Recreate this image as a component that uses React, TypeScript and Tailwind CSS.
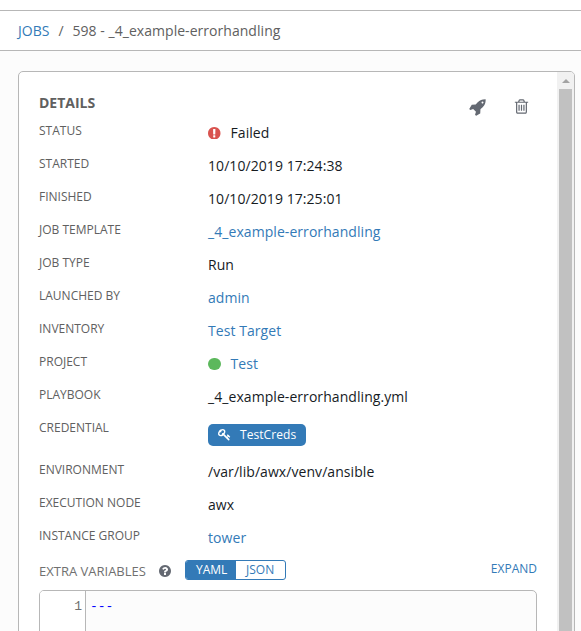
import type { ReactNode } from "react";

const ROCKET =
  "M1440 448q0-40-28-68t-68-28-68 28-28 68 28 68 68 28 68-28 28-68zm224-288q0 249-75.5 430.5t-253.5 360.5q-81 80-195 176l-20 379q-2 16-16 26l-384 224q-7 4-16 4-12 0-23-9l-64-64q-13-14-8-32l85-276-281-281-276 85q-3 1-9 1-14 0-23-9l-64-64q-17-19-5-39l224-384q10-14 26-16l379-20q96-114 176-195 188-187 358-258t431-71q14 0 24 9.5t10 22.5z";
const TRASH =
  "M704 736v576q0 14-9 23t-23 9h-64q-14 0-23-9t-9-23v-576q0-14 9-23t23-9h64q14 0 23 9t9 23zm256 0v576q0 14-9 23t-23 9h-64q-14 0-23-9t-9-23v-576q0-14 9-23t23-9h64q14 0 23 9t9 23zm256 0v576q0 14-9 23t-23 9h-64q-14 0-23-9t-9-23v-576q0-14 9-23t23-9h64q14 0 23 9t9 23zm128 724v-948h-896v948q0 22 7 40.5t14.5 27 10.5 8.5h832q3 0 10.5-8.5t14.5-27 7-40.5zm-672-1076h448l-48-117q-7-9-17-11h-317q-10 2-17 11zm928 32v64q0 14-9 23t-23 9h-96v948q0 83-47 143.5t-113 60.5h-832q-66 0-113-58.5t-47-141.5v-952h-96q-14 0-23-9t-9-23v-64q0-14 9-23t23-9h309l70-167q15-37 54-63t79-26h320q40 0 79 26t54 63l70 167h309q14 0 23 9t9 23z";
const KEY =
  "M832 512q0-80-56-136t-136-56-136 56-56 136q0 42 19 83-41-19-83-19-80 0-136 56t-56 136 56 136 136 56 136-56 56-136q0-42-19-83 41 19 83 19 80 0 136-56t56-136zm851 704q0 17-49 66t-66 49q-9 0-28.5-16t-36.5-33-38.5-40-24.5-26l-96 96 220 220q28 28 28 68 0 42-39 81t-81 39q-40 0-68-28l-671-671q-176 131-365 131-163 0-265.5-102.5t-102.5-265.5q0-160 95-313t248-248 313-95q163 0 265.5 102.5t102.5 265.5q0 189-131 365l355 355 96-96q-3-3-26-24.5t-40-38.5-33-36.5-16-28.5q0-17 49-66t66-49q13 0 23 10 6 6 46 44.5t82 79.5 86.5 86 73 78 28.5 41z";
const ALERT =
  "M896 128q209 0 385.5 103t279.5 279.5 103 385.5-103 385.5-279.5 279.5-385.5 103-385.5-103-279.5-279.5-103-385.5 103-385.5 279.5-279.5 385.5-103zm128 1247v-190q0-14-9-23.5t-22-9.5h-192q-13 0-23 10t-10 23v190q0 13 10 23t23 10h192q13 0 22-9.5t9-23.5zm-2-344l18-621q0-12-10-18-10-8-24-8h-220q-14 0-24 8-10 6-10 18l17 621q0 10 10 17.5t24 7.5h185q14 0 23.5-7.5t10.5-17.5z";
const QUESTION =
  "M1024 1376v-192q0-14-9-23t-23-9h-192q-14 0-23 9t-9 23v192q0 14 9 23t23 9h192q14 0 23-9t9-23zm256-672q0-88-55.5-163t-138.5-116-170-41q-243 0-371 213-15 24 8 42l132 100q7 6 19 6 16 0 25-12 53-68 86-92 34-24 86-24 48 0 85.5 26t37.5 59q0 38-20 61t-68 45q-63 28-115.5 86.5t-52.5 125.5v36q0 14 9 23t23 9h192q14 0 23-9t9-23q0-19 21.5-49.5t54.5-49.5q32-18 49-28.5t46-35 44.5-48 28-60.5 12.5-81zm384 192q0 209-103 385.5t-279.5 279.5-385.5 103-385.5-103-279.5-279.5-103-385.5 103-385.5 279.5-279.5 385.5-103 385.5 103 279.5 279.5 103 385.5z";

function Icon({ path, className, box = "0 0 1792 1792" }: { path: string; className: string; box?: string }) {
  return (
    <svg viewBox={box} fill="currentColor" className={`shrink-0 ${className}`}>
      <path d={path} />
    </svg>
  );
}

function Row({ label, link, tall, children }: { label: string; link?: boolean; tall?: boolean; children: ReactNode }) {
  return (
    <div className={`flex ${tall ? "h-[42px]" : "h-[33px]"}`}>
      <div className="w-[169px] shrink-0 text-xs leading-5 text-[#606060]">{label}</div>
      <div
        className={`flex h-6 items-center text-sm tracking-[0.065px] ${link ? "text-[#337ab7]" : "text-[#161b1f]"}`}
      >
        {children}
      </div>
    </div>
  );
}

export default function App() {
  return (
    <div className="flex h-[631px] w-[581px] flex-col overflow-hidden bg-[#fcfcfc] font-['Open_Sans','Noto_Sans',sans-serif]">
      <div className="h-[10px] shrink-0 bg-white" />
      <nav className="flex h-[41px] shrink-0 items-center border-y border-[#b7b7b7] bg-white pl-[18px] text-sm text-[#606060]">
        <a className="text-[#337ab7]">JOBS</a>
        <span className="px-[9px]">/</span>
        <span className="tracking-[0.04px]">598 - _4_example-errorhandling</span>
      </nav>

      <main className="mt-5 ml-[18px] flex h-[600px] w-[557px] shrink-0 overflow-hidden rounded-[5px] border border-[#b7b7b7] bg-white">
        <section className="w-[538px] shrink-0 pl-5">
          <header className="flex h-[49px] justify-between pt-[21px] pr-[27px]">
            <h1 className="text-sm leading-5 font-bold text-[#606060]">DETAILS</h1>
            <div className="flex items-start gap-[26px] pt-[5px] text-[#646972]">
              <Icon path={ROCKET} className="size-[18px]" />
              <Icon path={TRASH} className="size-[17px]" />
            </div>
          </header>

          <Row label="STATUS">
            <Icon path={ALERT} box="128 128 1536 1536" className="mr-2.5 size-[12.5px] text-[#d9534f]" />
            Failed
          </Row>
          <Row label="STARTED">10/10/2019 17:24:38</Row>
          <Row label="FINISHED">10/10/2019 17:25:01</Row>
          <Row label="JOB TEMPLATE" link>_4_example-errorhandling</Row>
          <Row label="JOB TYPE">Run</Row>
          <Row label="LAUNCHED BY" link>admin</Row>
          <Row label="INVENTORY" link>Test Target</Row>
          <Row label="PROJECT" link>
            <span className="mr-2.5 size-[12.5px] rounded-full bg-[#5cb85c]" />
            Test
          </Row>
          <Row label="PLAYBOOK">_4_example-errorhandling.yml</Row>
          <Row label="CREDENTIAL" tall>
            <span className="mt-[9px] flex h-[22px] w-[98px] items-center rounded-[5px] bg-[#337ab7] pl-[9px] text-xs text-white">
              <Icon path={KEY} className="mr-[9px] ml-px size-[13px]" />
              TestCreds
            </span>
          </Row>
          <Row label="ENVIRONMENT">/var/lib/awx/venv/ansible</Row>
          <Row label="EXECUTION NODE">awx</Row>
          <Row label="INSTANCE GROUP" link>tower</Row>

          <div className="mt-px flex h-5 w-[498px] items-center text-xs">
            <span className="mt-[3px] w-[120px] text-[13px] text-[#707070]">EXTRA VARIABLES</span>
            <Icon path={QUESTION} box="128 128 1536 1536" className="mr-px mt-[2px] size-3 text-[#646972]" />
            <div className="ml-[13px] flex h-5 w-[101px] overflow-hidden rounded-[3px] border border-[#337ab7] leading-[18px]">
              <span className="w-[50px] bg-[#337ab7] pl-[10px] text-white">YAML</span>
              <span className="pl-[10px] text-[#337ab7]">JSON</span>
            </div>
            <a className="ml-auto pb-[2px] text-[#337ab7]">EXPAND</a>
          </div>

          <div className="mt-[10px] flex h-[90px] w-[498px] overflow-hidden rounded-[5px] border border-[#b7b7b7] bg-[#fcfcfc] font-['Liberation_Mono',monospace] text-[13px] leading-[22px]">
            <div className="w-[46px] border-r border-[#b7b7b7] bg-white pt-[5px] pr-[3px] text-right text-[#707070]">1</div>
            <div className="pt-[5px] pl-[4px] text-[#0000ff]">---</div>
          </div>
        </section>

        <aside className="flex w-[17px] shrink-0 flex-col items-center bg-[#f1f1f1]">
          <div className="flex h-[17px] items-center">
            <svg viewBox="0 0 8 4" className="h-1 w-2 fill-[#a3a3a3]">
              <path d="M4 0 8 4H0z" />
            </svg>
          </div>
          <div className="w-[13px] flex-1 bg-[#c1c1c1]" />
        </aside>
      </main>
    </div>
  );
}
